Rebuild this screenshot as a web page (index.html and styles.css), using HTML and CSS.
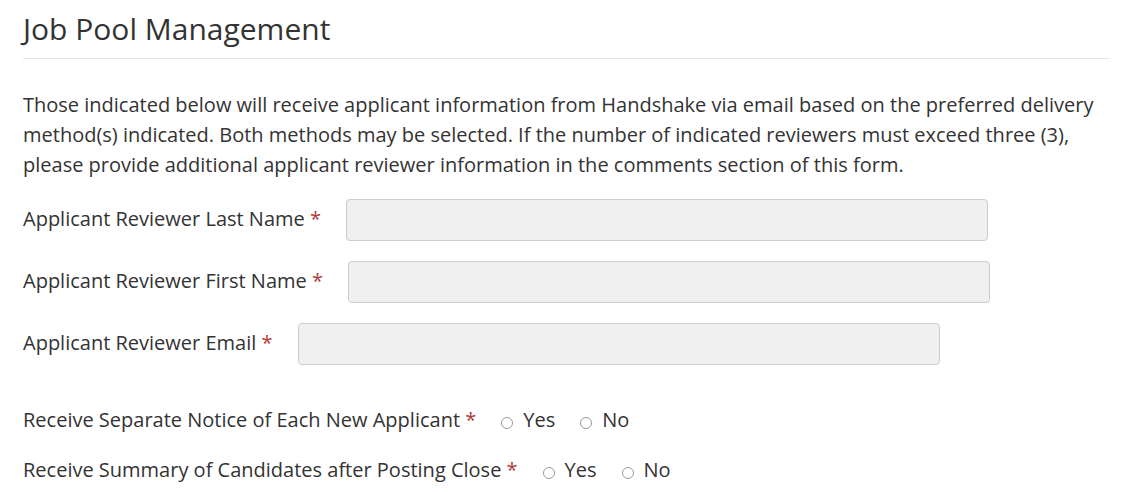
FILE: index.html
```html
<!DOCTYPE html>
<html lang="en">
<head>
    <meta charset="UTF-8">
    <title>Job Pool Management</title>
    <link rel="stylesheet" href="styles.css">
</head>
<body>
    <div class="container">
        <h2>Job Pool Management</h2>
        <p class="intro">Those indicated below will receive applicant information from Handshake via email based on the preferred delivery method(s) indicated. Both methods may be selected. If the number of indicated reviewers must exceed three (3), please provide additional applicant reviewer information in the comments section of this form.</p>

        <div class="field">
            <label for="lastName">Applicant Reviewer Last Name <span class="req">*</span></label>
            <input type="text" id="lastName">
        </div>
        <div class="field">
            <label for="firstName">Applicant Reviewer First Name <span class="req">*</span></label>
            <input type="text" id="firstName">
        </div>
        <div class="field">
            <label for="email">Applicant Reviewer Email <span class="req">*</span></label>
            <input type="text" id="email">
        </div>

        <div class="radio-row first">
            <span class="radio-label">Receive Separate Notice of Each New Applicant <span class="req">*</span></span>
            <label class="opt"><input type="radio" name="notice"> Yes</label>
            <label class="opt"><input type="radio" name="notice"> No</label>
        </div>
        <div class="radio-row">
            <span class="radio-label">Receive Summary of Candidates after Posting Close <span class="req">*</span></span>
            <label class="opt"><input type="radio" name="summary"> Yes</label>
            <label class="opt"><input type="radio" name="summary"> No</label>
        </div>
    </div>
</body>
</html>
```

FILE: styles.css
```css
body {
    margin: 0;
    font-family: "Open Sans", Arial, sans-serif;
    color: #333;
    background: #fff;
}
.container {
    padding: 0 12px 0 23px;
}
h2 {
    font-size: 30px;
    font-weight: 400;
    margin: 0;
    padding: 10px 0 11px;
    line-height: 37px;
    border-bottom: 1px solid #e5e5e5;
}
.intro {
    font-size: 20px;
    line-height: 30px;
    margin: 31px 0 19px;
}
.field {
    display: flex;
    align-items: center;
    height: 42px;
    margin-bottom: 20px;
    font-size: 20px;
}
.field label {
    margin: -4px 25px 0 0;
}
.field input {
    width: 642px;
    height: 42px;
    box-sizing: border-box;
    background: #f0f0f0;
    border: 1px solid #ccc;
    border-radius: 4px;
}
.req {
    color: #b03a3a;
}
.radio-row {
    display: flex;
    align-items: center;
    font-size: 20px;
    height: 30px;
    margin-bottom: 20px;
}
.radio-row.first {
    margin-top: 39px;
}
.radio-label {
    margin-right: 25px;
}
.opt {
    display: flex;
    align-items: center;
    margin-right: 25px;
}
.opt input {
    appearance: none;
    width: 12px;
    height: 12px;
    margin: 8px 10px 0 0;
    border: 1px solid #999;
    border-radius: 50%;
}
```
